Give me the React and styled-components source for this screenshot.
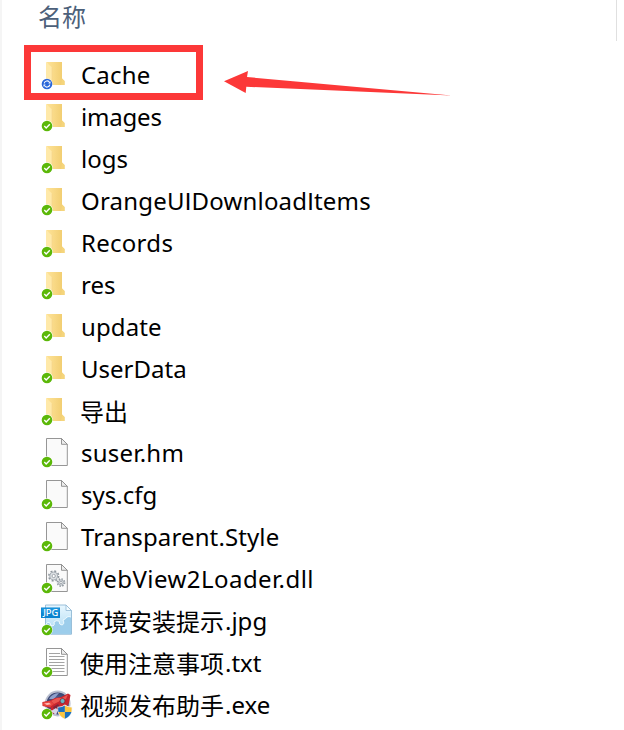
import React from "react";
import styled, { createGlobalStyle } from "styled-components";

const GlobalStyle = createGlobalStyle`
  body { margin: 0; background: #fff; }
`;

const Explorer = styled.main`
  position: relative;
  box-sizing: border-box;
  width: 624px;
  height: 730px;
  border-left: 2px solid #f5f5f5;
  background: #fff;
  font-family: "Noto Sans", "Noto Sans CJK SC", sans-serif;
  font-size: 24px;
  color: #000;
`;

const HeaderRow = styled.header`
  display: flex;
  box-sizing: border-box;
  width: 615px;
  height: 41px;
  margin-bottom: 13px;
  padding-left: 36px;
  border-right: 1px solid #e0e0e0;
  color: #4c607a;
  line-height: 32px;
  font-family: "Noto Sans CJK SC", sans-serif;
  font-weight: 400;
`;

const FileList = styled.ul`
  margin: 0;
  padding: 0;
  list-style: none;
`;

const FileRow = styled.li`
  display: flex;
  height: 42px;
  padding-left: 38px;
  white-space: nowrap;
`;

const IconSvg = styled.svg`
  flex: none;
  width: 36px;
  height: 36px;
  margin: 3px 5px 0 0;
`;

const FileName = styled.span`
  display: flex;
  height: 42px;
  line-height: 42px;
`;

const Chinese = styled.span`
  margin: 0 1px 0 -1px;
  font-family: "Noto Sans CJK SC", sans-serif;
`;

const Latin = styled.span`
  letter-spacing: ${(p) => p.$spacing}px;
`;

const PlainCapital = styled.span`
  font-family: Roboto, sans-serif;
`;

const Highlight = styled.div`
  position: absolute;
  box-sizing: border-box;
  left: 22px;
  top: 45px;
  width: 179px;
  height: 55px;
  border: 7px solid #fc3838;
`;

const Arrow = styled.svg`
  position: absolute;
  left: 218px;
  top: 60px;
  width: 240px;
  height: 50px;
`;

function Badge({ sync }) {
  if (sync) {
    return (
      <g>
        <circle cx="7" cy="27" r="5.6" fill="#fff" />
        <circle cx="7" cy="27" r="5.3" fill="#2b67d9" />
        <path d="M4.2 26.3a2.9 2.9 0 0 1 5.4-.9M9.8 27.7a2.9 2.9 0 0 1-5.4.9" fill="none" stroke="#fff" strokeWidth="1.1" />
        <path d="M8.3 26.4h2.2v-2.2zM5.7 27.6H3.5v2.2z" fill="#fff" />
      </g>
    );
  }
  return (
    <g>
      <circle cx="7" cy="27" r="5.8" fill="#fff" />
      <circle cx="7" cy="27" r="5.3" fill="#5bb808" />
      <path d="M4.3 27.1l1.9 1.9 3.6-3.7" fill="none" stroke="#fff" strokeWidth="1.4" />
    </g>
  );
}

function Folder() {
  return (
    <g>
      <path d="M6 5H22V21.5L24.5 24V28H12V13z" fill="url(#folderFront)" />
      <path d="M22 21.5L24.5 24V28H21z" fill="#f5d57c" />
      <path d="M6 5L12 10.5V26L11 28H6z" fill="#ffe9a9" />
      <path d="M12 10.5V27" stroke="#f3d58b" strokeWidth=".6" />
    </g>
  );
}

function Page({ fill = "#fafafa" }) {
  return (
    <g stroke="#8a8a8a" strokeWidth=".9">
      <path d="M6.5 3.5H21.5L27.3 9.3V30.5H6.5z" fill={fill} />
      <path d="M21.5 3.5V9.3H27.3z" fill="#ededed" />
    </g>
  );
}

function Gear({ x, y, r }) {
  return (
    <g transform={`translate(${x} ${y})`}>
      <circle r={r} fill="none" stroke="#8f979e" strokeWidth="1.6" strokeDasharray={`${(r * Math.PI) / 8} ${(r * Math.PI) / 8}`} />
      <circle r={r - 0.9} fill="#dde1e4" stroke="#9aa2a9" strokeWidth=".8" />
      <circle r={r / 3} fill="#fff" stroke="#8f979e" strokeWidth=".8" />
    </g>
  );
}

function Library() {
  return (
    <g>
      <Page />
      <Gear x={13.7} y={15} r={4.9} />
      <Gear x={21} y={21.5} r={3.6} />
    </g>
  );
}

function Jpeg() {
  return (
    <g>
      <path d="M5.5 2H26L31.5 7.5V31.2H5.5z" fill="url(#photo)" stroke="#91b9d5" strokeWidth=".9" strokeLinejoin="round" />
      <path d="M26 2V7.5H31.5z" fill="#f5fcff" stroke="#91b9d5" strokeWidth=".8" />
      <path d="M6 21q2-3 4-1q0 3 3 3q2-1 1-4q2-2 5-1q0 4 3 4q3-1 1-5q3-1 4-3q2-1 4 0V30.7H6z" fill="#9ccdeb" />
      <path d="M6 21q2-3 4-1q0 3 3 3q2-1 1-4q2-2 5-1q0 4 3 4q3-1 1-5q3-1 4-3q2-1 4 0" fill="none" stroke="#eefaff" strokeWidth="1" />
      <rect x="1" y="4.5" width="19" height="10.5" fill="#0a84d0" />
      <rect x="1.5" y="5" width="18" height="4.5" fill="#1793dc" />
      <text x="10.7" y="13.2" textAnchor="middle" fill="#fff" fontFamily="Noto Sans, sans-serif" fontSize="9.3" fontWeight="500">JPG</text>
    </g>
  );
}

function TextPage() {
  return (
    <g>
      <Page fill="#fff" />
      <path d="M9 8.5H20M9 11.5H24.5M9 14.5H24.5M9 17.5H24.5M9 20.5H24.5M9 23.5H24.5M9 26.5H24.5" stroke="#a4a4a4" strokeWidth="1" />
    </g>
  );
}

function Program() {
  return (
    <g>
      <circle cx="17.7" cy="16.5" r="12" fill="url(#space)" stroke="#b9bfd0" strokeWidth="1.8" />
      <path d="M9 12Q12 6.5 19 6L14 12z" fill="#8ea0cc" />
      <path d="M2.5 15L10 13.5L15 11L21 10L28 6.5L30.5 8L29 16L26 21L18 23L14 27L10 25L11 21L2.5 19z" fill="#c7252e" />
      <path d="M11 14L17 11L22 11L28 7.5L26 12L20 14L14 17z" fill="#ea5650" />
      <path d="M2.5 15.5L10 14L14 17L10 20L3 18.5z" fill="#e8453f" />
      <path d="M4 16.5L9 15.7L11 17.2L7 18z" fill="#ffbcb6" />
      <circle cx="22.5" cy="14" r="2.5" fill="#65b6c4" stroke="#8b2131" strokeWidth=".8" />
      <path d="M13 20L18 17L20 20L15 24z" fill="#82243b" />
      <path d="M11 24L16 21L18 23L16 28z" fill="#d8d5e7" />
      <path d="M24.9 17.6Q28 20 32.3 19.8V23.5Q31.8 29.5 24.9 32.4Q18 29.5 17.5 23.5V19.8Q21.8 20 24.9 17.6z" fill="#f2f5f7" />
      <path d="M24.9 18.4V25H18.4Q18.1 23.5 18.1 20.5Q22 20.5 24.9 18.4z" fill="#1b70bd" />
      <path d="M24.9 18.4V25H31.4Q31.7 23.5 31.7 20.5Q27.8 20.5 24.9 18.4z" fill="#fac43e" />
      <path d="M24.9 25V31.8Q19.7 29.5 18.4 25z" fill="#fac43e" />
      <path d="M24.9 25V31.8Q30.1 29.5 31.4 25z" fill="#1b70bd" />
    </g>
  );
}

const drawings = {
  folder: Folder,
  page: Page,
  library: Library,
  jpeg: Jpeg,
  text: TextPage,
  program: Program,
};

const files = [
  { latin: "Cache", kind: "folder", sync: true, spacing: 0.2 },
  { latin: "images", kind: "folder", spacing: -0.2 },
  { latin: "logs", kind: "folder" },
  { latin: "OrangeUIDownloadItems", kind: "folder", spacing: 0.2 },
  { latin: "Records", kind: "folder", spacing: 0.28 },
  { latin: "res", kind: "folder" },
  { latin: "update", kind: "folder", spacing: 0.1 },
  { latin: "UserData", kind: "folder" },
  { chinese: "导出", kind: "folder" },
  { latin: "suser.hm", kind: "page", spacing: 0.25 },
  { latin: "sys.cfg", kind: "page" },
  { latin: "Transparent.Style", kind: "page", spacing: 0.12 },
  { latin: "WebView2Loader.dll", kind: "library", spacing: 0.45 },
  { chinese: "环境安装提示", latin: ".jpg", kind: "jpeg" },
  { chinese: "使用注意事项", latin: ".txt", kind: "text" },
  { chinese: "视频发布助手", latin: ".exe", kind: "program" },
];

function FileIcon({ kind, sync }) {
  const Drawing = drawings[kind];
  return (
    <IconSvg viewBox="0 0 36 36" aria-hidden="true">
      <defs>
        <linearGradient id="folderFront">
          <stop offset="0" stopColor="#ffe49a" />
          <stop offset="1" stopColor="#f0cb6c" />
        </linearGradient>
        <linearGradient id="photo" x2="0" y2="1">
          <stop offset="0" stopColor="#e8f7ff" />
          <stop offset="1" stopColor="#abd9f2" />
        </linearGradient>
        <radialGradient id="space">
          <stop offset="0" stopColor="#6577ad" />
          <stop offset="1" stopColor="#35406b" />
        </radialGradient>
      </defs>
      <Drawing />
      <Badge sync={sync} />
    </IconSvg>
  );
}

function LatinName({ text, spacing = 0 }) {
  return (
    <Latin $spacing={spacing}>
      {text.split(/(I)/).map((part, i) => (part === "I" ? <PlainCapital key={i}>I</PlainCapital> : part))}
    </Latin>
  );
}

export default function App() {
  return (
    <>
      <GlobalStyle />
      <Explorer>
        <HeaderRow>名称</HeaderRow>
        <FileList>
          {files.map((file) => (
            <FileRow key={file.kind + file.chinese + file.latin}>
              <FileIcon kind={file.kind} sync={file.sync} />
              <FileName>
                {file.chinese && <Chinese>{file.chinese}</Chinese>}
                {file.latin && <LatinName text={file.latin} spacing={file.spacing} />}
              </FileName>
            </FileRow>
          ))}
        </FileList>
        <Highlight />
        <Arrow viewBox="0 0 240 50" aria-hidden="true">
          <path d="M4 21.3L28 11L27 17L231.5 35.4L26.3 26.8L25.7 33z" fill="#fc3838" />
        </Arrow>
      </Explorer>
    </>
  );
}
